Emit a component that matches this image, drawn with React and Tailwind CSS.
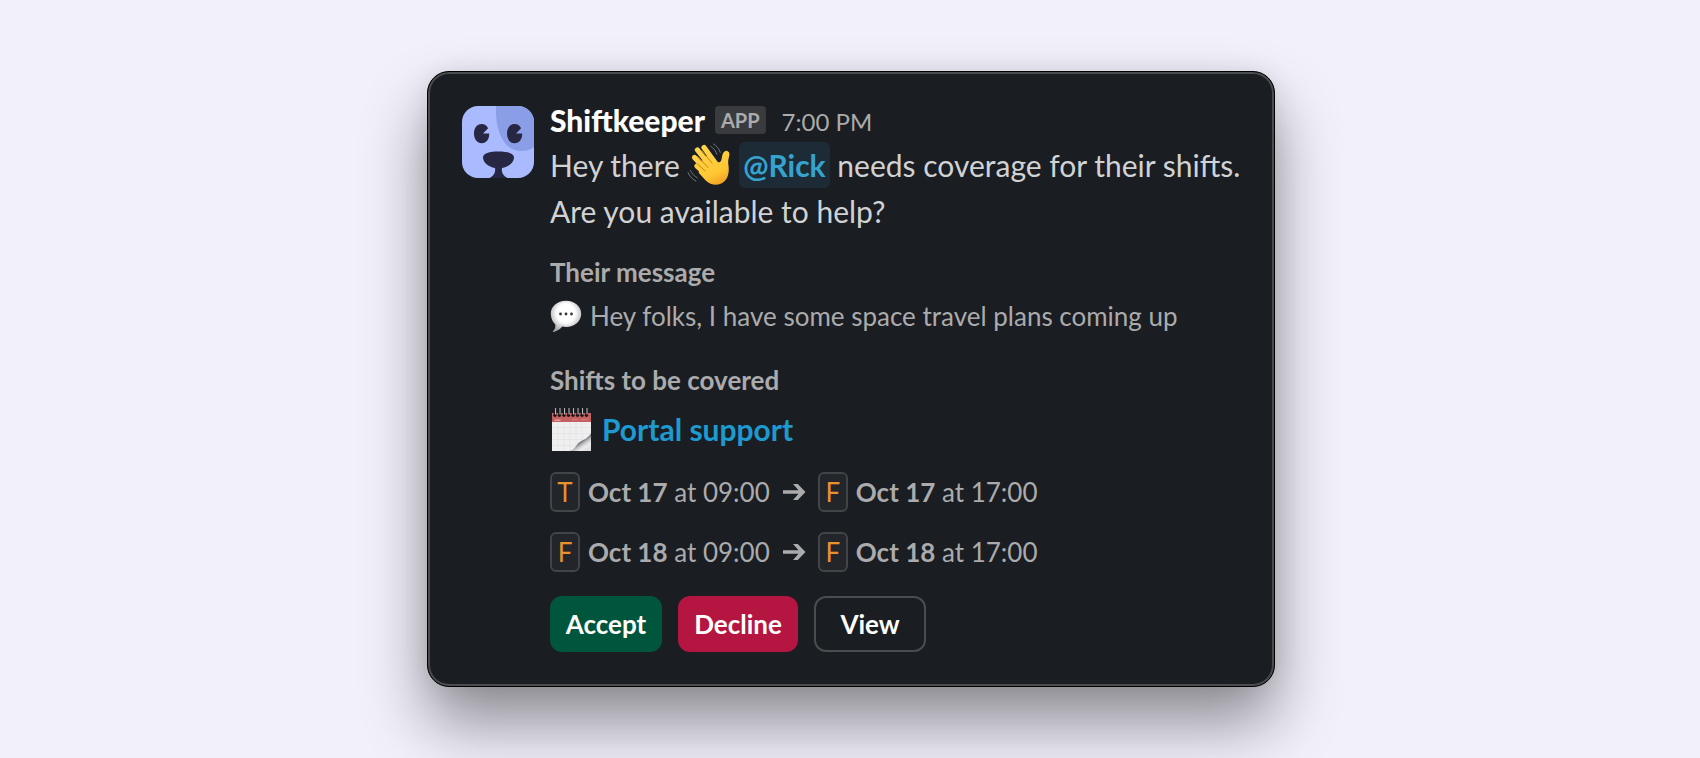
import React from 'react';

const shifts = [
  { id: 1, from: { day: 'T', date: 'Oct 17', time: '09:00' }, to: { day: 'F', date: 'Oct 17', time: '17:00' } },
  { id: 2, from: { day: 'F', date: 'Oct 18', time: '09:00' }, to: { day: 'F', date: 'Oct 18', time: '17:00' } },
];

const Avatar = () => (
  <svg viewBox="0 0 72 72" className="size-[72px] shrink-0 rounded-2xl" role="img" aria-label="Shiftkeeper">
    <rect width="72" height="72" fill="#a9baff" />
    <path d="M34 0C33 22 40 45 59 45c5 0 9-1 13-4V0z" fill="#8a9ee8" />
    <g fill="#272643">
      <path d="M19.500 18c3 0 5.400 1.600 6.600 4.200L21 27.600h6.200c.2 5.600-2.800 9.700-7.500 9.700-4.600 0-7.700-4.100-7.700-9.700S15 18 19.500 18z" />
      <path d="M52.500 18c3 0 5.400 1.600 6.600 4.200L54 27.600h6.200c.2 5.600-2.800 9.700-7.500 9.700-4.600 0-7.700-4.100-7.700-9.700S48 18 52.500 18z" />
      <path d="M36.500 45.500c9 0 15.500 1.800 15.500 6 0 5-5.500 9.200-12 10.500-.8 4 1 8 5.500 10h-18c4.500-2 6.300-6 5.500-10-6.500-1.300-12-5.500-12-10.500 0-4.200 6.500-6 15.500-6z" />
    </g>
  </svg>
);

const WavingHand = () => (
  <svg viewBox="0 0 44 44" className="inline-block size-11 align-[-10px]" role="img" aria-label="waving hand">
    <defs>
      <linearGradient id="hand" gradientUnits="userSpaceOnUse" x1="12" y1="4" x2="32" y2="44">
        <stop offset="0" stopColor="#ffd54a" />
        <stop offset="0.7" stopColor="#ffc633" />
        <stop offset="1" stopColor="#f09a1e" />
      </linearGradient>
    </defs>
    <g stroke="url(#hand)" strokeWidth="5.200" strokeLinecap="round">
      <path d="M17 4.500L29 21" />
      <path d="M10.500 7L24 24" />
      <path d="M7.500 14.500L21 29" />
      <path d="M10 23L22 34" />
    </g>
    <path d="M19 13l5-1.500 4 5.500c1.700 2 3.600 2.800 5 2 1.600-1 1.600-3.400 2.200-6.200.6-3 2.300-5.300 4.700-4.900 2.500.4 2.900 2.700 2.300 5.100-.8 3-1.300 5.700-.8 8.800.9 6.500.3 12.300-3.700 16.300-5.300 5.400-13.400 4.900-19.200-.9l-6.800-7.500 1-9z" fill="url(#hand)" />
    <g stroke="#c98212" strokeWidth="1" strokeLinecap="round" fill="none">
      <path d="M15 8L25 20" />
      <path d="M10.500 13.500L21 24.500" />
      <path d="M10.500 21L18 28" />
    </g>
    <g stroke="#74767b" strokeWidth="1" strokeLinecap="round" fill="none">
      <path d="M24 3.500c2.800 1.800 4.800 4.500 6 7.800" />
      <path d="M26.500 1c3.200 1.900 5.500 4.800 6.800 8.500" />
      <path d="M3.500 27.500c1.500 3.200 3.700 5.600 6.800 7.300" />
      <path d="M1 29.500c1.600 3.800 4.200 6.600 7.800 8.500" />
    </g>
  </svg>
);

const SpeechBubble = () => (
  <svg viewBox="0 0 32 32" className="size-8 shrink-0" role="img" aria-label="speech balloon">
    <defs>
      <radialGradient id="bubble" cx="0.5" cy="0.4" r="0.6">
        <stop offset="0.5" stopColor="#ffffff" />
        <stop offset="1" stopColor="#a8a8aa" />
      </radialGradient>
    </defs>
    <path d="M16 .8c8.600 0 15.200 5.600 15.200 13S24.600 27 16 27c-1.300 0-2.600-.1-3.800-.4-2.200 2.700-5.200 4.700-8.500 5.300-.8.100-1-.6-.4-1.100 1.500-1.300 2.300-3.500 2-6.400C2.500 21.800.8 18 .8 13.800.8 6.400 7.400.8 16 .8z" fill="url(#bubble)" />
    <g fill="#333538">
      <circle cx="10.500" cy="14" r="1.400" />
      <circle cx="16" cy="14" r="1.400" />
      <circle cx="21.500" cy="14" r="1.400" />
    </g>
  </svg>
);

const rings = [4, 8.500, 13, 17.500, 22, 26.500, 31, 35.500];

const Calendar = () => (
  <svg viewBox="0 0 44 44" className="size-11 shrink-0" role="img" aria-label="calendar">
    <defs>
      <linearGradient id="curl" gradientUnits="userSpaceOnUse" x1="28" y1="31" x2="37" y2="44">
        <stop offset="0" stopColor="#d8d8d9" />
        <stop offset="0.3" stopColor="#77797b" />
        <stop offset="0.5" stopColor="#c4c5c6" />
        <stop offset="0.7" stopColor="#ececec" />
        <stop offset="1" stopColor="#dededf" />
      </linearGradient>
    </defs>
    <rect x="2" y="14" width="39" height="30" fill="#f0eff0" />
    <path d="M2 20.500h39M2 26.500h39M2 32.500h39M2 38.500h39M8 15v29M14 15v29M20 15v29M26 15v29M32 15v29" stroke="#e3e2e4" strokeWidth="0.800" />
    <rect x="2" y="6" width="39" height="9" fill="#c4605f" />
    <path d="M4.500 13.200h6" stroke="#e3b0af" strokeWidth="1.200" />
    <path d="M31 12.500h7M22 12.500h6" stroke="#cf7b7a" strokeWidth="1" />
    <path d="M20 44c5-1.500 6-6 9-8.500C33 32.500 38 32 41 26v18z" fill="url(#curl)" />
    {rings.map((x) => (
      <g key={x}>
        <circle cx={x + 1} cy="8.200" r="1.700" fill="#3a2226" />
        <path d={`M${x + 1} 8.500V2.500`} stroke="#101113" strokeWidth="2.200" strokeLinecap="round" />
        <path d={`M${x + 1.500} 7V1.500`} stroke="#b9bbbe" strokeWidth="1.100" strokeLinecap="round" />
      </g>
    ))}
  </svg>
);

const Arrow = () => (
  <svg viewBox="0 0 24 20" className="mx-3 h-5 w-6 shrink-0" fill="#ababad" aria-hidden="true">
    <path d="M1 8.300h15.500L11 2h4.800l7.700 8-7.700 8H11l5.500-6.300H1z" />
  </svg>
);

const ShiftTime = ({ day, date, time }) => (
  <span className="flex items-center gap-2">
    <code className="flex h-10 w-[30px] items-center justify-center rounded-md border-2 border-[#424447] bg-[#222529] font-['Lato',sans-serif] text-[#e8912d]">
      {day}
    </code>
    <span>
      <b className="font-bold">{date}</b> at {time}
    </span>
  </span>
);

const App = () => {
  return (
    <main className="flex min-h-screen items-center justify-center bg-[#f2f0fb] pl-0.5 font-['Lato',sans-serif]">
      <article className="flex w-full max-w-[848px] gap-4 rounded-[22px] border border-black bg-[#1a1d21] py-[34px] pr-8 pl-[34px] shadow-[0_36px_64px_rgba(0,0,0,0.42),0_0_24px_rgba(0,0,0,0.08)] inset-ring-2 inset-ring-[#4b4c50]">
        <Avatar />
        <div className="min-w-0 flex-1">
          {/* Sender */}
          <header className="flex h-9 items-start">
            <h1 className="text-[30px] leading-7 font-black text-white">Shiftkeeper</h1>
            <span className="ml-2.5 flex h-7 items-center rounded-sm bg-[#393b3f] px-1.5 text-xl font-bold text-[#ababad]">APP</span>
            <time className="ml-4 text-2xl leading-8 text-[#ababad]">7:00 PM</time>
          </header>

          <p className="text-[30px] leading-[46px] text-[#d1d2d3]">
            Hey there <WavingHand />{' '}
            <a href="#" className="inline-block rounded-md bg-[#1c2b36] px-1 font-bold text-[#36a3cf]">@Rick</a>{' '}
            needs coverage for their shifts.
            <br />
            Are you available to help?
          </p>

          {/* Message from the requester */}
          <h2 className="mt-5 text-[26px] leading-9 font-bold text-[#ababad]">Their message</h2>
          <p className="mt-2 flex items-center gap-2 text-[26px] leading-9 text-[#ababad]">
            <SpeechBubble />
            Hey folks, I have some space travel plans coming up
          </p>

          {/* Shifts */}
          <h2 className="mt-7 text-[26px] leading-9 font-bold text-[#ababad]">Shifts to be covered</h2>
          <div className="mt-2 flex items-center gap-2">
            <Calendar />
            <a href="#" className="text-[30px] leading-[46px] font-bold text-[#1d9bd1]">Portal support</a>
          </div>
          <ul className="mt-5 space-y-5 text-[26px] leading-10 text-[#ababad]">
            {shifts.map((shift) => (
              <li key={shift.id} className="flex items-center">
                <ShiftTime {...shift.from} />
                <Arrow />
                <ShiftTime {...shift.to} />
              </li>
            ))}
          </ul>

          <div className="mt-6 flex gap-4 text-[26px] font-bold text-white">
            <button type="button" className="h-14 w-28 rounded-xl bg-[#00553d]">Accept</button>
            <button type="button" className="h-14 w-[120px] rounded-xl bg-[#b41541]">Decline</button>
            <button type="button" className="h-14 w-28 rounded-xl border-2 border-[#4b4c50]">View</button>
          </div>
        </div>
      </article>
    </main>
  );
};

export default App;
